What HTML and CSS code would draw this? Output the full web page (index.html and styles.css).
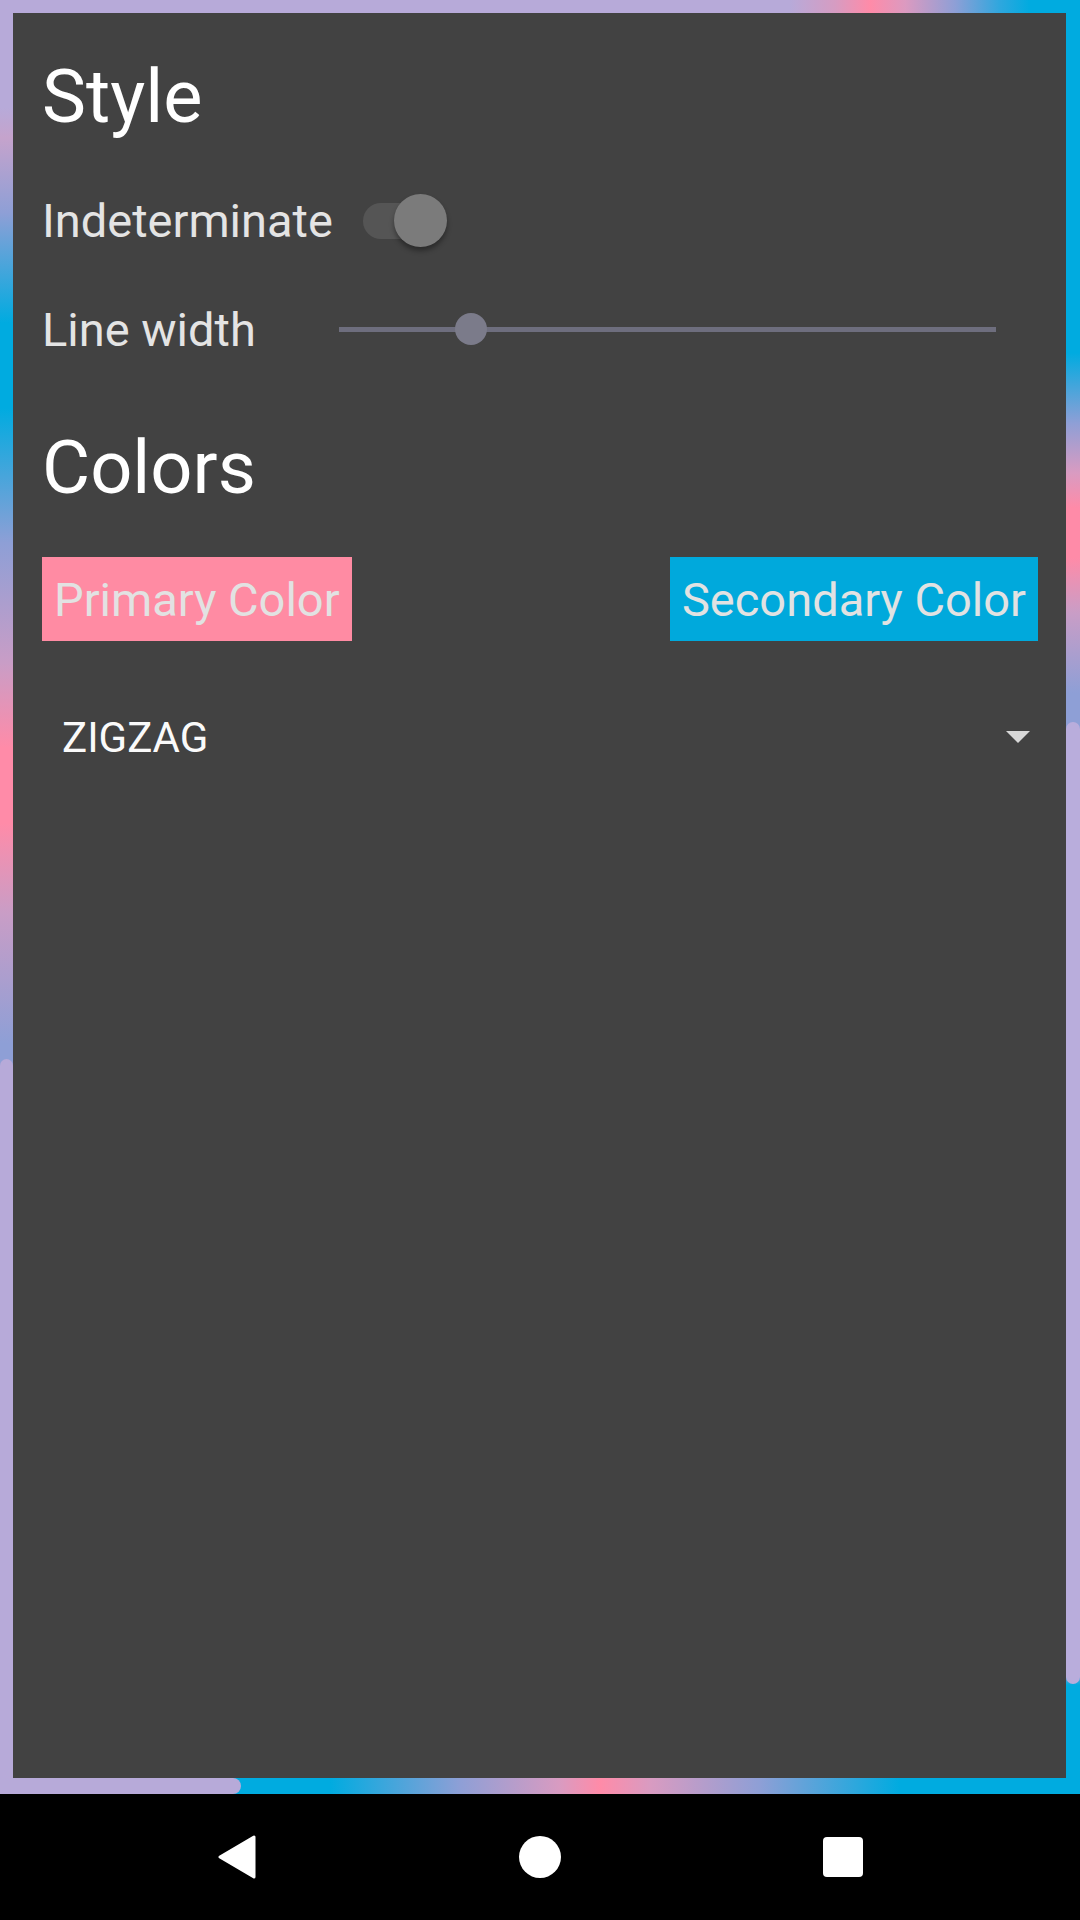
FILE: index.html
```html
<!DOCTYPE html>
<html lang="en">
<head>
<meta charset="utf-8">
<title>Style</title>
<link rel="stylesheet" href="styles.css">
</head>
<body>
<div class="screen">
  <div class="frame">
    <div class="edge edge-top"></div>
    <div class="edge edge-left"><span class="tail tail-left"></span></div>
    <main class="panel">
      <h2 class="heading">Style</h2>
      <div class="row row-toggle">
        <span class="label">Indeterminate</span>
        <div class="switch">
          <span class="switch-track"></span>
          <span class="switch-thumb"></span>
        </div>
      </div>
      <div class="row row-slider">
        <span class="label">Line width</span>
        <div class="slider">
          <span class="slider-track"></span>
          <span class="slider-thumb"></span>
        </div>
      </div>
      <h2 class="heading heading-colors">Colors</h2>
      <div class="buttons">
        <button class="btn btn-primary">Primary Color</button>
        <button class="btn btn-secondary">Secondary Color</button>
      </div>
      <div class="dropdown">
        <span class="dropdown-text">ZIGZAG</span>
        <span class="dropdown-arrow"></span>
      </div>
    </main>
    <div class="edge edge-right"><span class="tail tail-right"></span></div>
    <div class="edge edge-bottom"><span class="tail tail-bottom"></span></div>
  </div>
  <nav class="navbar">
    <div class="nav-slot">
      <svg class="nav-back" width="40" height="44" viewBox="0 0 40 44"><polygon points="37,2 37,42 3,22" fill="#fff" stroke="#fff" stroke-width="3" stroke-linejoin="round"/></svg>
    </div>
    <div class="nav-slot"><span class="nav-home"></span></div>
    <div class="nav-slot"><span class="nav-recent"></span></div>
  </nav>
</div>
</body>
</html>
```

FILE: styles.css
```css
html, body {
  margin: 0;
  padding: 0;
  background: #000;
}

body {
  width: 1080px;
  height: 1920px;
  overflow: hidden;
  font-family: Roboto, "Noto Sans", "Liberation Sans", sans-serif;
}

.screen {
  width: 1080px;
  height: 1920px;
  display: flex;
  flex-direction: column;
}

.frame {
  display: grid;
  grid-template-columns: 13px 1fr 14px;
  grid-template-rows: 13px 1765px 16px;
  height: 1794px;
}

.edge-top {
  grid-column: 1 / 4;
  background: linear-gradient(to right,
    #b7aad9 0, #b7aad9 790px, #d69cc2 835px, #ff8ba8 870px,
    #dc9ac0 905px, #8e9fd6 955px, #2ea7de 1000px, #00abe0 1030px, #00abe0 100%);
}

.edge-left {
  display: flex;
  flex-direction: column;
  justify-content: flex-end;
  background: linear-gradient(to bottom,
    #b7aad9 0, #b7aad9 95px, #c5a3cc 125px, #8e9fd6 200px,
    #00abe0 310px, #00abe0 395px, #8e9fd6 530px, #c99dc6 650px,
    #ff8ba8 735px, #ff8ba8 810px, #c99dc6 900px, #8e9fd6 1030px, #8e9fd6 100%);
}

.edge-right {
  display: flex;
  flex-direction: column;
  padding-top: 709px;
  background: linear-gradient(to bottom,
    #00abe0 0, #00abe0 340px, #8e9fd6 410px, #d99bc1 460px,
    #ff8ba8 495px, #ff8ba8 545px, #c99dc6 600px, #8e9fd6 680px,
    #8e9fd6 1660px, #00abe0 1672px, #00abe0 100%);
}

.edge-bottom {
  grid-column: 1 / 4;
  display: flex;
  background: linear-gradient(to right,
    #00abe0 0, #00abe0 330px, #8e9fd6 460px, #d99bc1 560px,
    #ff8ba8 600px, #d99bc1 650px, #8e9fd6 760px, #00abe0 900px, #00abe0 100%);
}

.tail {
  display: block;
  background: #b7aad9;
}

.tail-left {
  height: 719px;
  border-radius: 7px 7px 0 0;
}

.tail-right {
  height: 962px;
  border-radius: 7px;
  background: #b9addc;
}

.tail-bottom {
  width: 241px;
  border-radius: 0 8px 8px 0;
}

.panel {
  background: #424242;
  padding: 42px 28px 0 29px;
  display: flex;
  flex-direction: column;
}

.heading {
  margin: 0;
  font-size: 74px;
  line-height: 84px;
  font-weight: 400;
  color: #ffffff;
}

.row {
  display: flex;
  align-items: center;
  height: 60px;
}

.row-toggle {
  margin-top: 51px;
}

.row-slider {
  margin-top: 49px;
}

.label {
  font-size: 47px;
  color: #e4e4e4;
}

.switch {
  position: relative;
  width: 84px;
  height: 53px;
  margin-left: 30px;
}

.switch-track {
  position: absolute;
  left: 0;
  top: 9px;
  width: 76px;
  height: 36px;
  border-radius: 18px;
  background: #555555;
}

.switch-thumb {
  position: absolute;
  right: 0;
  top: 0;
  width: 53px;
  height: 53px;
  border-radius: 50%;
  background: #7b7b7b;
  box-shadow: 0 4px 5px rgba(0, 0, 0, 0.35);
}

.slider {
  position: relative;
  flex: 1;
  height: 32px;
  margin-left: 83px;
  margin-right: 42px;
  display: flex;
  align-items: center;
}

.slider-track {
  display: block;
  width: 100%;
  height: 5px;
  background: #6e6e7e;
}

.slider-thumb {
  position: absolute;
  left: 116px;
  top: 0;
  width: 32px;
  height: 32px;
  border-radius: 50%;
  background: #7b7b8a;
}

.heading-colors {
  margin-top: 67px;
}

.buttons {
  margin-top: 47px;
  display: flex;
  justify-content: space-between;
}

.btn {
  height: 84px;
  padding: 0 12px;
  border: none;
  border-radius: 0;
  font-family: Roboto, "Noto Sans", "Liberation Sans", sans-serif;
  font-size: 47px;
  color: #e2e2e2;
  display: flex;
  align-items: center;
}

.btn-primary {
  background: #ff8ba3;
}

.btn-secondary {
  background: #00a9dc;
}

.dropdown {
  margin-top: 66px;
  height: 60px;
  padding: 0 8px 0 20px;
  display: flex;
  align-items: center;
  justify-content: space-between;
}

.dropdown-text {
  font-size: 42px;
  color: #fafafa;
}

.dropdown-arrow {
  width: 0;
  height: 0;
  border-left: 12.5px solid transparent;
  border-right: 12.5px solid transparent;
  border-top: 12px solid #d8d8d8;
}

.navbar {
  height: 126px;
  background: #000;
  display: flex;
  justify-content: center;
  align-items: center;
}

.nav-slot {
  width: 303px;
  display: flex;
  justify-content: center;
  align-items: center;
}

.nav-back {
  display: block;
}

.nav-home {
  display: block;
  width: 42px;
  height: 42px;
  border-radius: 50%;
  background: #fff;
}

.nav-recent {
  display: block;
  width: 40px;
  height: 40px;
  border-radius: 4px;
  background: #fff;
}
```
